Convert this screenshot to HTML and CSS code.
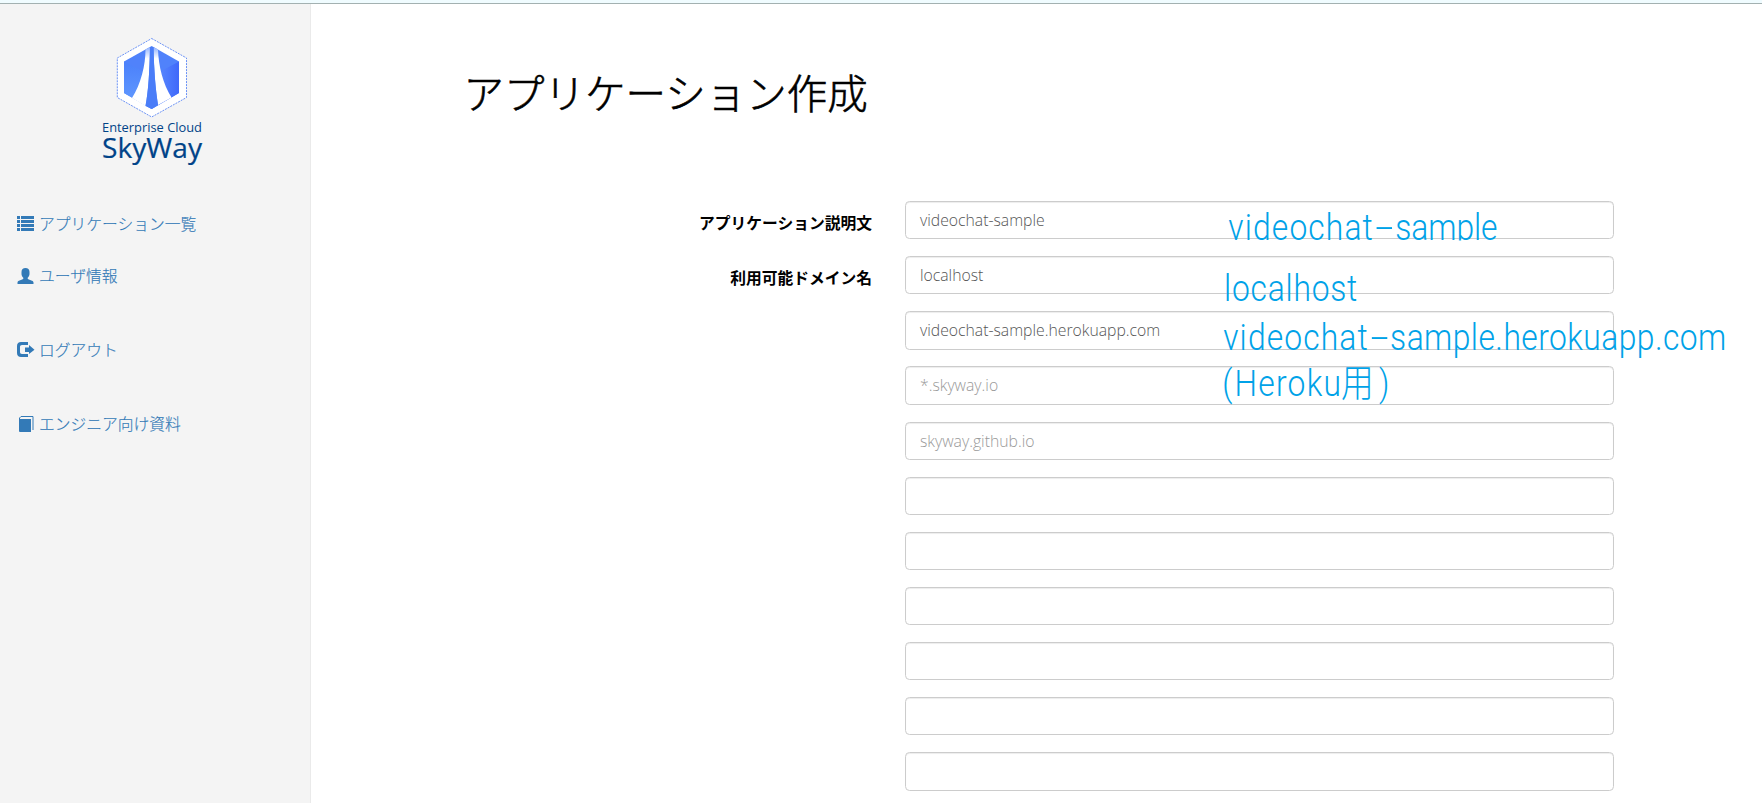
FILE: index.html
```html
<!DOCTYPE html>
<html lang="ja">
<head>
<meta charset="utf-8">
<title>SkyWay</title>
<link rel="stylesheet" href="styles.css">
</head>
<body>
<header class="topbar"></header>
<div class="layout">
  <aside class="sidebar">
    <svg class="logo" width="110" height="140" viewBox="90 30 110 140">
      <defs>
        <linearGradient id="left" x1="0" y1="0" x2="0" y2="1"><stop offset="0" stop-color="#4b80fb"/><stop offset="1" stop-color="#649dff"/></linearGradient>
        <linearGradient id="right" x1="0" x2="1"><stop offset="0" stop-color="#6092ff"/><stop offset="1" stop-color="#3f68fa"/></linearGradient>
        <linearGradient id="road" x1="0" y1="0" x2="0" y2="1"><stop offset="0" stop-color="#8fb1ff"/><stop offset=".2" stop-color="#fff"/></linearGradient>
      </defs>
      <path d="M151.700 38.500 186.500 58V97.500L151.700 117 117.300 97.500V58Z" fill="#fff" stroke="#6b92f5" stroke-width="1" stroke-dasharray="2 1"/>
      <path d="M151.700 46 179 61.500V93L151.700 109 124 93V61.500Z" fill="#5082fb"/>
      <path d="M124 61.500 151.700 76V109L124 93Z" fill="url(#left)"/>
      <path d="M151.700 76 179 61.500V93L151.700 109Z" fill="url(#right)"/>
      <path d="M145.500 49.500 150 47C149.500 72 148.500 90 145.500 106L132 98C141 84 145.500 65 145.500 49.500Z" fill="url(#road)"/>
      <path d="M153.500 47 158 49.500C158.500 66 163 84 171.500 97.500L158 105C155.500 89 154 70 153.500 47Z" fill="url(#road)"/>
      <path d="M150 47H153.500C154 72 155.500 89 158 105L151.700 109 145.500 106C148.500 90 149.500 72 150 47Z" fill="#4a7df8"/>
      <text class="logo-sub" x="102" y="132" textLength="100" lengthAdjust="spacingAndGlyphs">Enterprise Cloud</text>
      <text class="logo-name" x="102" y="157.500" textLength="100" lengthAdjust="spacingAndGlyphs">SkyWay</text>
    </svg>
    <nav class="menu">
      <a class="item"><svg class="icon" viewBox="0 0 17 16"><path d="M0 0h3v3H0zM4 0h13v3H4zM0 4h3v3H0zM4 4h13v3H4zM0 8h3v3H0zM4 8h13v3H4zM0 12h3v3H0zM4 12h13v3H4z"/></svg>アプリケーション一覧</a>
      <a class="item"><svg class="icon" viewBox="0 0 16 16"><path d="M8 0C5.500 0 4 1.500 4 4v2c0 1.500.7 2.800 1.800 3.800v1C4.800 12.200 0 12.200 0 14.500V16h16v-1.500c0-2.300-4.800-2.300-5.800-3.700v-1C11.300 8.800 12 7.500 12 6V4c0-2.500-1.500-4-4-4z"/></svg>ユーザ情報</a>
      <a class="item item-gap"><svg class="icon" viewBox="0 0 17 16"><path d="M11 0H4C1.500 0 0 1.500 0 4v7c0 2.500 1.500 4 4 4h7v-3H5c-1.300 0-2-.7-2-2V5c0-1.300.7-2 2-2h6zM8 5.500H12V3l5.500 4.700L12 12V10H8z"/></svg>ログアウト</a>
      <a class="item item-gap"><svg class="icon" viewBox="0 0 17 16"><path d="M2 3H14V16H3Q2 16 2 15z"/><path class="cover" d="M2.500 3V2L4 .5H16V14"/></svg>エンジニア向け資料</a>
    </nav>
  </aside>
  <main class="main">
    <h1 class="title">アプリケーション作成</h1>
    <form class="form">
      <label class="label">アプリケーション説明文</label>
      <div class="field">videochat-sample</div>
      <label class="label">利用可能ドメイン名</label>
      <div class="fields">
        <div class="field">localhost</div>
        <div class="field">videochat-sample.herokuapp.com</div>
        <div class="field hint">*.skyway.io</div>
        <div class="field hint">skyway.github.io</div>
        <div class="field"></div>
        <div class="field"></div>
        <div class="field"></div>
        <div class="field"></div>
        <div class="field"></div>
        <div class="field"></div>
      </div>
    </form>
  </main>
</div>
<svg class="notes" width="562" height="240" viewBox="0 190 562 240">
  <defs><clipPath id="line"><path d="M0 190h700v50.500H0z"/></clipPath></defs>
  <g transform="scale(.86 1)">
    <g clip-path="url(#line)"><text y="240"><tspan x="33" textLength="168">videochat</tspan><tspan x="203.500" textLength="22" lengthAdjust="spacingAndGlyphs">-</tspan><tspan x="227" textLength="119">sample</tspan></text></g>
    <text x="28" y="301" textLength="155">localhost</text>
    <text y="350"><tspan x="27" textLength="168">videochat</tspan><tspan x="198" textLength="22" lengthAdjust="spacingAndGlyphs">-</tspan><tspan x="221" textLength="391">sample.herokuapp.com</tspan></text>
    <text y="396"><tspan x="26">(</tspan><tspan x="40" textLength="124">Heroku</tspan><tspan class="kanji" x="164">用</tspan><tspan x="208">)</tspan></text>
  </g>
</svg>
</body>
</html>
```
FILE: styles.css
```css
* { box-sizing: border-box; }
body {
  margin: 0;
  height: 803px;
  overflow: hidden;
  display: flex;
  flex-direction: column;
  background: #fff;
  color: #000;
  font: 300 15.75px/22.5px "Open Sans", "Noto Sans CJK JP", sans-serif;
}
.topbar { flex: none; height: 4px; background: #f0fcff; border-bottom: 1px solid #a3b1b1; }
.layout { flex: 1; display: flex; min-height: 0; }
.sidebar {
  flex: none;
  width: 311px;
  padding: 26px 17px;
  background: #f4f4f4;
  border-right: 1px solid #eaeaea;
}
.logo { display: block; margin-left: 73px; overflow: visible; }
.logo-sub { font: 500 13px "Open Sans", sans-serif; fill: #004388; }
.logo-name { font: 500 27px "Open Sans", sans-serif; fill: #004388; stroke: #004388; stroke-width: .2; }
.menu { display: flex; flex-direction: column; margin-top: 42px; }
.item { display: flex; align-items: center; gap: 5px; height: 24px; margin-bottom: 28px; color: #337ab7; font-family: "Noto Sans CJK JP", sans-serif; -webkit-text-stroke: .15px #337ab7; }
.item-gap { margin-top: 22px; }
.icon { width: 17px; height: 16px; fill: #337ab7; overflow: visible; }
.cover { fill: none; stroke: #337ab7; }
.main { flex: 1; min-width: 0; padding-left: 152.500px; }
.title {
  margin: 62px 0 0;
  height: 55px;
  font-size: 40.5px;
  line-height: 55px;
  font-weight: 300;
  -webkit-text-stroke: .6px #000;
}
.form { display: grid; grid-template-columns: 408.500px 709px; column-gap: 33px; row-gap: 16.875px; margin-top: 80.100px; }
.label { padding-top: 11px; text-align: right; font-weight: 700; }
.fields { display: flex; flex-direction: column; gap: 16.875px; }
.field {
  height: 38.250px;
  padding: 7px 14px;
  border: 1px solid #ccc;
  border-radius: 4.500px;
  box-shadow: inset 0 1px 1px rgba(0, 0, 0, .075);
  color: #555;
}
.hint { color: #999; }
.notes { position: absolute; left: 1200px; top: 190px; overflow: visible; fill: #00a2e8; font: 300 37px Roboto, "Noto Sans CJK JP", sans-serif; }
.kanji { font-size: 38px; }
```
